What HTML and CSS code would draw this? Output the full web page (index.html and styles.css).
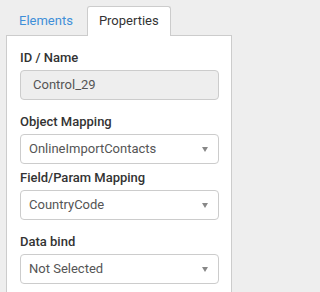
FILE: index.html
```html
<!DOCTYPE html>
<html>
<head>
<meta charset="utf-8">
<link rel="stylesheet" href="styles.css">
</head>
<body>
<div class="wrap">
  <div class="tabs">
    <div class="tab">Elements</div>
    <div class="tab active">Properties</div>
  </div>
  <div class="panel">
    <div class="group">
      <div class="label">ID / Name</div>
      <div class="input">Control_29</div>
    </div>
    <div class="group tight">
      <div class="label">Object Mapping</div>
      <div class="select"><span>OnlineImportContacts</span><i class="caret"></i></div>
    </div>
    <div class="group">
      <div class="label">Field/Param Mapping</div>
      <div class="select"><span>CountryCode</span><i class="caret"></i></div>
    </div>
    <div class="group">
      <div class="label">Data bind</div>
      <div class="select"><span>Not Selected</span><i class="caret"></i></div>
    </div>
  </div>
</div>
</body>
</html>
```

FILE: styles.css
```css
html, body {
  margin: 0;
  padding: 0;
  background: #eeeeee;
  font-family: Roboto, "Liberation Sans", sans-serif;
  font-size: 13px;
  color: #333;
}
body {
  width: 240px;
  height: 292px;
  overflow: hidden;
}
.wrap {
  width: 226px;
  padding: 6px 0 0 6px;
}
.tabs {
  display: flex;
  gap: 1px;
}
.tab {
  height: 28px;
  line-height: 28px;
  padding: 0 12px;
  border: 1px solid transparent;
  border-bottom: none;
  color: #3f8fd8;
  border-radius: 3px 3px 0 0;
}
.tab.active {
  background: #fff;
  border-color: #cccccc;
  color: #333;
  height: 29px;
  padding: 0 11px;
  margin-bottom: -1px;
  position: relative;
}
.panel {
  background: #fff;
  border: 1px solid #cccccc;
  padding: 13px 12px 20px 13px;
  height: 300px;
}
.group {
  margin-bottom: 13px;
}
.group.tight {
  margin-bottom: 5px;
}
.label {
  font-weight: 500;
  line-height: 18px;
  margin-bottom: 3px;
  color: #333;
}
.input, .select {
  height: 28px;
  line-height: 28px;
  border: 1px solid #cccccc;
  border-radius: 4px;
  color: #555;
}
.input {
  background: #eeeeee;
  padding: 0 12px;
}
.select {
  background: #fff;
  padding: 0 10px 0 8px;
  display: flex;
  align-items: center;
  justify-content: space-between;
}
.caret {
  width: 0;
  height: 0;
  border-left: 3.5px solid transparent;
  border-right: 3.5px solid transparent;
  border-top: 5px solid #888;
}
```
